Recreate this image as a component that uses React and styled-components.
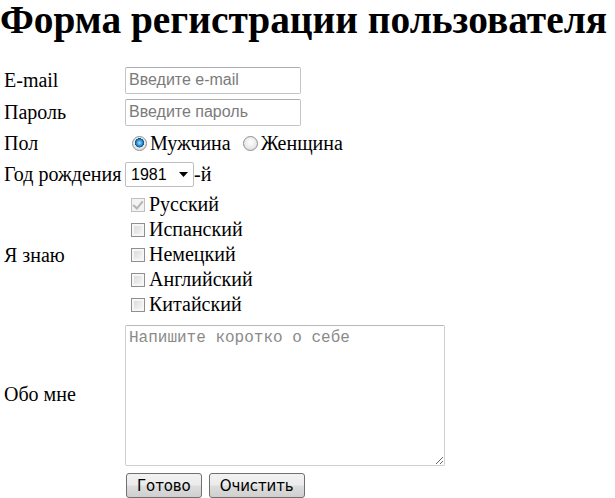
import React from "react";
import styled, { createGlobalStyle } from "styled-components";

const GlobalStyle = createGlobalStyle`
    html, body {
        margin: 0;
        padding: 0;
        background: #ffffff;
    }

    body {
        font-family: "Liberation Serif", "Times New Roman", serif;
        font-size: 20px;
        color: #000000;
    }
`;

const Page = styled.div`
    padding: 0;
`;

const Title = styled.h1`
    margin: 0;
    height: 64px;
    font-size: 39.4px;
    line-height: 40px;
    font-weight: bold;
    white-space: nowrap;
`;

const FormGrid = styled.form`
    display: grid;
    grid-template-columns: 125px auto;
    align-items: center;
    justify-items: start;
`;

const Label = styled.div`
    padding-left: 4px;
    white-space: nowrap;
    align-self: center;
`;

const Cell = styled.div`
    display: flex;
    align-items: center;
    height: ${(p) => p.h}px;
`;

const TextInput = styled.input`
    box-sizing: border-box;
    width: 176px;
    height: 27px;
    margin: 0;
    padding: 2px 3px;
    border: 1px solid #c4c4c4;
    border-top-color: #abadb3;
    border-radius: 2px;
    font-family: "Liberation Sans", Arial, sans-serif;
    font-size: 16px;
    outline: none;

    &::placeholder {
        color: #7b7b7b;
    }
`;

const Radio = styled.input.attrs({ type: "radio" })`
    appearance: none;
    box-sizing: border-box;
    width: 15px;
    height: 15px;
    margin: 0 3px 0 7px;
    border-radius: 50%;
    border: 1px solid #8e8f8f;
    background: radial-gradient(circle at 50% 40%, #ffffff 0%, #eaeaea 55%, #d2d2d2 100%);

    &:checked {
        background:
            radial-gradient(circle at 50% 45%, #a8e4ff 0%, #2c8fd6 30%, #0b4d8a 46%, transparent 50%),
            radial-gradient(circle at 50% 40%, #ffffff 0%, #eaeaea 55%, #cfcfcf 100%);
    }
`;

const RadioText = styled.label`
    margin-right: 5px;
`;

const SelectWrap = styled.span`
    position: relative;
    display: inline-block;
`;

const Select = styled.select`
    appearance: none;
    box-sizing: border-box;
    width: 69px;
    height: 25px;
    margin: 0;
    padding: 0 0 0 5px;
    border: 1px solid #bebebe;
    border-radius: 2px;
    background: #ffffff;
    font-family: "Liberation Sans", Arial, sans-serif;
    font-size: 16px;
    color: #000;
    outline: none;
`;

const Arrow = styled.svg`
    position: absolute;
    right: 6px;
    top: 10px;
    pointer-events: none;
`;

const Checks = styled.div`
    display: flex;
    flex-direction: column;
    padding: 2px 0 3px;
`;

const CheckRow = styled.label`
    display: flex;
    align-items: center;
    height: 25px;
`;

const Checkbox = styled.input.attrs({ type: "checkbox" })`
    appearance: none;
    position: relative;
    box-sizing: border-box;
    width: 14px;
    height: 14px;
    margin: 0 4px 0 6px;
    border: 1px solid #8f8f8f;
    border-radius: 0;
    background:
        linear-gradient(135deg, #dcdcdc 0%, #f4f4f4 100%) 2px 2px / 8px 8px no-repeat,
        #f6f6f6;

    &:disabled {
        border-color: #c0c0c0;
        background: #f3f3f3;
    }

    &:checked::after {
        content: "";
        position: absolute;
        left: 3px;
        top: 0px;
        width: 4px;
        height: 8px;
        border: solid #b5b5b5;
        border-width: 0 2px 2px 0;
        transform: rotate(40deg);
    }
`;

const About = styled.textarea`
    box-sizing: border-box;
    width: 320px;
    height: 141px;
    margin: 5px 0 3px;
    padding: 3px;
    border: 1px solid #cfcfcf;
    border-top-color: #b8b8b8;
    border-radius: 2px;
    font-family: "Liberation Mono", "Courier New", monospace;
    font-size: 16px;
    outline: none;

    &::placeholder {
        color: #8a8a8a;
    }
`;

const Buttons = styled.div`
    grid-column: 2;
    display: flex;
    gap: 7px;
    padding: 4px 0 0 1px;
`;

const Button = styled.button`
    box-sizing: border-box;
    height: 25px;
    padding: 0 10px;
    margin: 0;
    border: 1px solid #707070;
    border-radius: 3px;
    background: linear-gradient(#f2f2f2 0%, #ebebeb 48%, #dddddd 52%, #cfcfcf 100%);
    font-family: "DejaVu Sans", Tahoma, sans-serif;
    font-size: 15px;
    letter-spacing: -0.1px;
    color: #000;
`;

export default function App() {
    const years = [1979, 1980, 1981, 1982, 1983];
    const langs = ["Русский", "Испанский", "Немецкий", "Английский", "Китайский"];

    return (
        <Page>
            <GlobalStyle />
            <Title>Форма регистрации пользователя</Title>
            <FormGrid onSubmit={(e) => e.preventDefault()}>
                <Label>E-mail</Label>
                <Cell h={32}>
                    <TextInput type="email" placeholder="Введите e-mail" />
                </Cell>

                <Label>Пароль</Label>
                <Cell h={32}>
                    <TextInput type="password" placeholder="Введите пароль" />
                </Cell>

                <Label>Пол</Label>
                <Cell h={31}>
                    <Radio name="sex" id="male" defaultChecked />
                    <RadioText htmlFor="male">Мужчина</RadioText>
                    <Radio name="sex" id="female" />
                    <RadioText htmlFor="female">Женщина</RadioText>
                </Cell>

                <Label>Год рождения</Label>
                <Cell h={31}>
                    <SelectWrap>
                        <Select defaultValue={1981}>
                            {years.map((y) => (
                                <option key={y} value={y}>{y}</option>
                            ))}
                        </Select>
                        <Arrow width="9" height="5" viewBox="0 0 9 5">
                            <path d="M0 0 H9 L4.5 5 Z" fill="#000" />
                        </Arrow>
                    </SelectWrap>
                    -й
                </Cell>

                <Label>Я знаю</Label>
                <Checks>
                    {langs.map((lang, i) => (
                        <CheckRow key={lang}>
                            <Checkbox defaultChecked={i === 0} disabled={i === 0} />
                            {lang}
                        </CheckRow>
                    ))}
                </Checks>

                <Label>Обо мне</Label>
                <About placeholder="Напишите коротко о себе" />

                <Buttons>
                    <Button type="submit">Готово</Button>
                    <Button type="reset">Очистить</Button>
                </Buttons>
            </FormGrid>
        </Page>
    );
}
